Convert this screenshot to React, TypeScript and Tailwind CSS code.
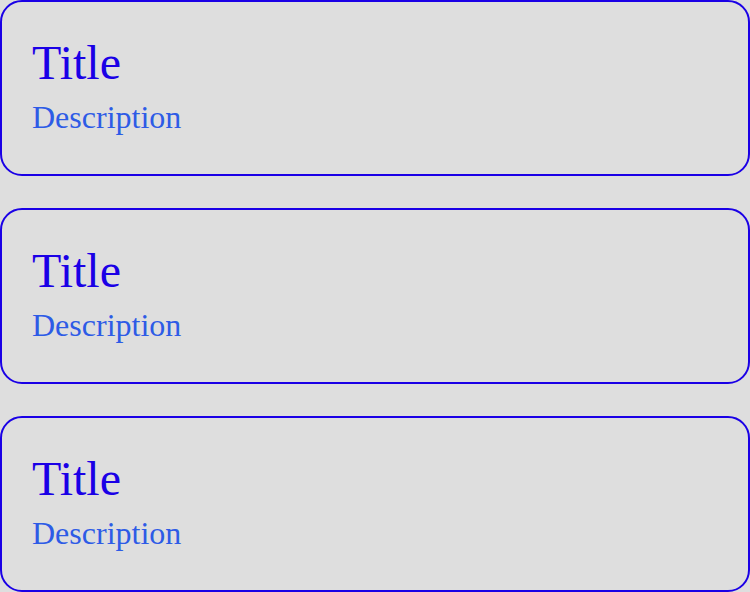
const cards = [
  { title: "Title", description: "Description" },
  { title: "Title", description: "Description" },
  { title: "Title", description: "Description" },
];

export default function App() {
  return (
    <div className="flex min-h-screen w-[750px] flex-col gap-8 bg-[#dedede] font-['Liberation_Serif',serif]">
      {cards.map((card, index) => (
        <div
          key={index}
          className="box-border h-[176px] rounded-[22px] border-2 border-[#1a00e6] px-[30px] pt-[33px]"
        >
          <div className="text-[48px] leading-[normal] text-[#1a00e6]">
            {card.title}
          </div>
          <div className="mt-[9px] text-[32px] leading-[normal] text-[#2d5be6]">
            {card.description}
          </div>
        </div>
      ))}
    </div>
  );
}
